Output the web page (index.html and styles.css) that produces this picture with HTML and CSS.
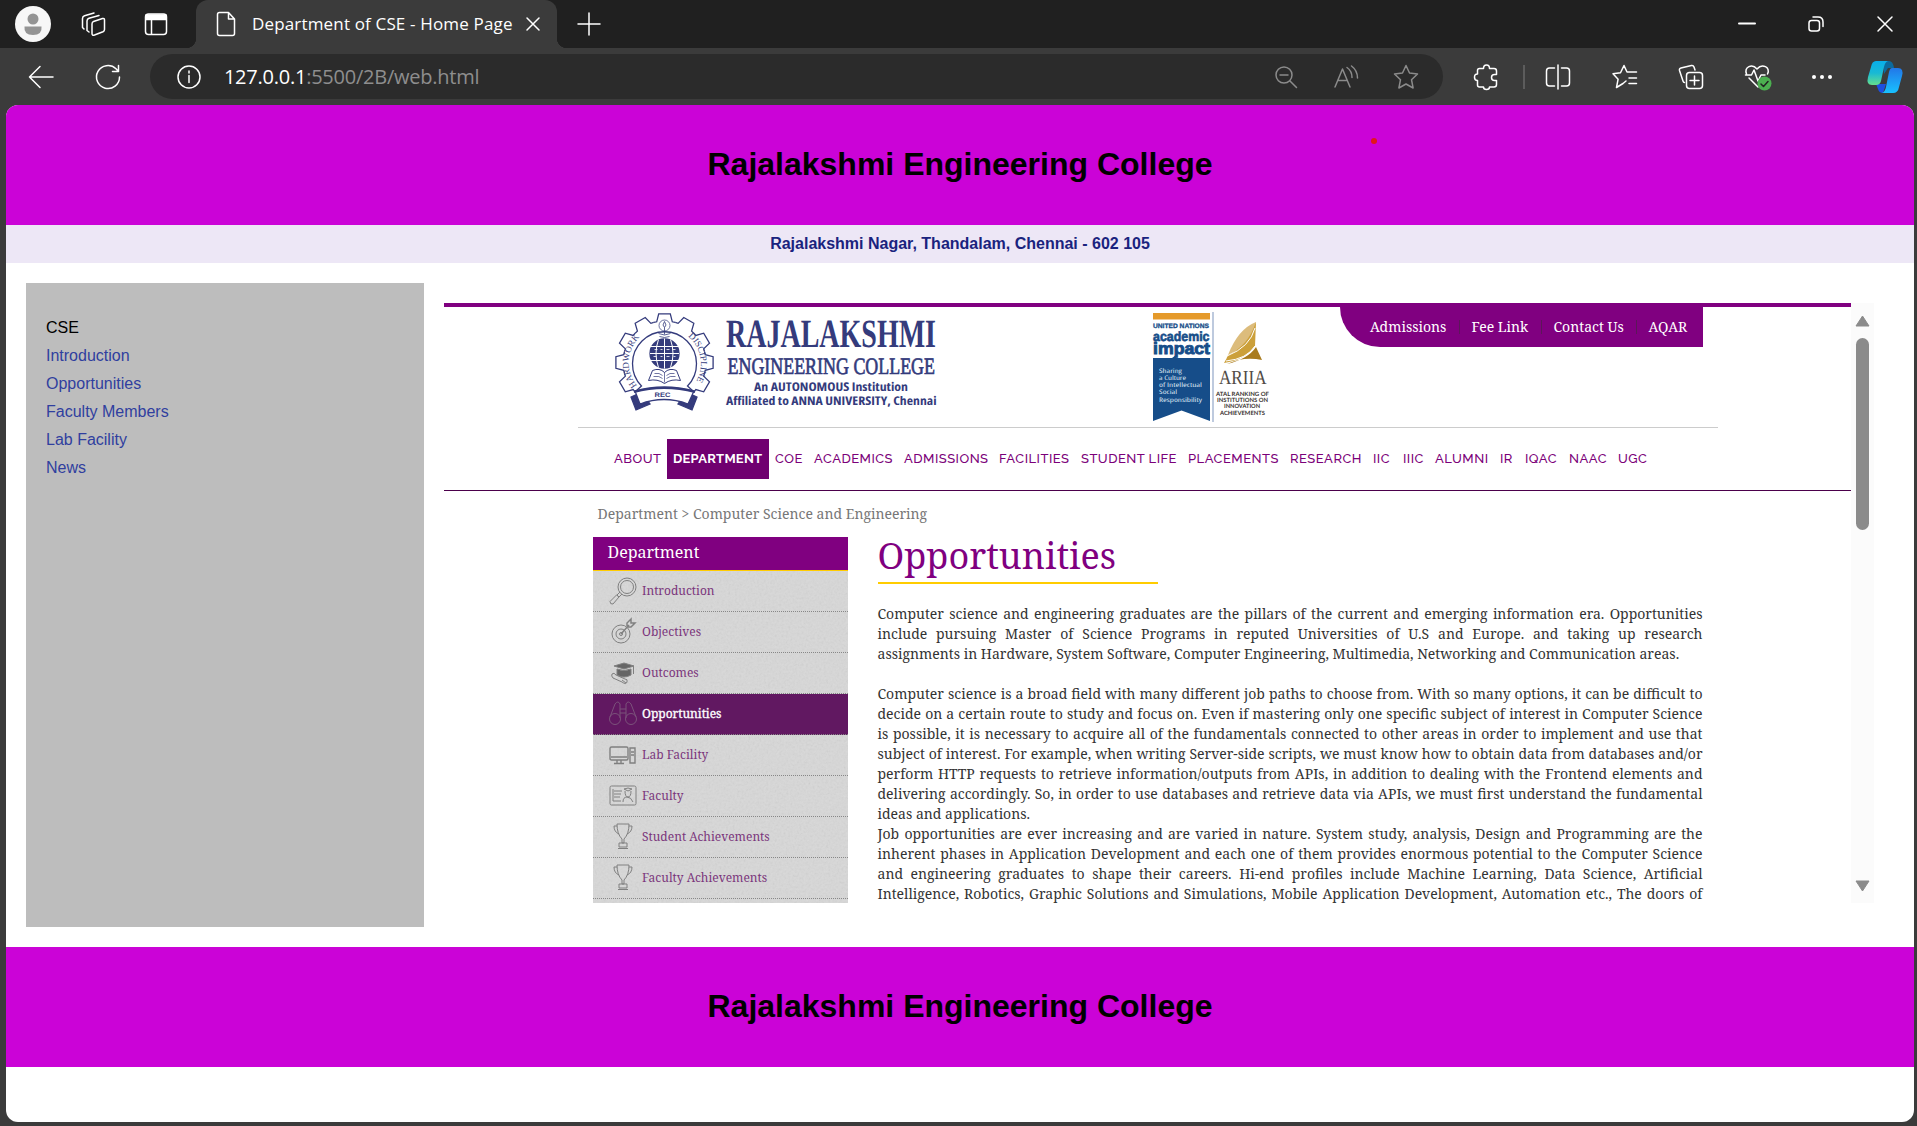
FILE: index.html
```html
<!DOCTYPE html>
<html lang="en">
<head>
<meta charset="utf-8">
<title>Department of CSE - Home Page</title>
<link rel="stylesheet" href="styles.css">
</head>
<body>
<div class="browser">
  <div class="titlebar">
    <div class="cell profile"><svg width="36" height="36" viewBox="0 0 36 36"><circle cx="18" cy="18" r="18" fill="#f7f7f7"/><circle cx="18" cy="13" r="5.500" fill="#949494"/><path d="M9.500 20.500h17q1 8.500-8.500 8.500t-8.500-8.500z" fill="#949494"/></svg></div>
    <div class="cell spaces"><svg class="ico" width="26" height="26" viewBox="0 0 26 26"><path d="M13.500 10.500L22.500 7.500Q24.500 7 24.500 9V18.500Q24.500 20 23 20.700L14.500 24Q12 24.800 12 22.500V13Q12 11 13.500 10.500z"/><path d="M9 21l-2-1.500V10q0-2 2-2.800L19 4.500M4 18l-1.500-1.500V7.500q0-2 2-2.700L14 2"/></svg></div>
    <div class="cell tabs-ico"><svg class="ico" width="24" height="24" viewBox="0 0 24 24"><rect x="1.500" y="2" width="21" height="20.500" rx="3"/><path d="M2 3h20v4.500H2z" fill="#fff"/><path d="M7.500 7v15"/></svg></div>
    <div class="tab">
      <svg class="ico" width="20" height="26" viewBox="0 0 20 26"><path d="M3.500 1.500h9l6 6.500v14.500q0 2-2 2h-13q-2 0-2-2v-19q0-2 2-2zM12.500 1.500v6.500h6"/></svg>
      <span class="tab-title">Department of CSE - Home Page</span>
      <svg class="ico x" width="14" height="14" viewBox="0 0 14 14"><path d="M1 1l12 12M13 1L1 13"/></svg>
    </div>
    <svg class="ico plus" width="22" height="22" viewBox="0 0 22 22"><path d="M11 0v22M0 11h22"/></svg>
    <div class="winctl">
      <svg class="ico" width="16" height="16" viewBox="0 0 16 16"><path d="M0 7.500h16" stroke-width="2"/></svg>
      <svg class="ico" width="16" height="16" viewBox="0 0 16 16"><rect x="1" y="4.500" width="10.500" height="10.500" rx="2.500"/><path d="M5 1h5q5 0 5 5v4.500"/></svg>
      <svg class="ico" width="16" height="16" viewBox="0 0 16 16"><path d="M1 1l14 14M15 1L1 15"/></svg>
    </div>
  </div>
  <div class="toolbar">
    <div class="cell back"><svg class="ico" width="26" height="24" viewBox="0 0 26 24"><path d="M25 12H1.500M12 1.500L1.500 12 12 22.500"/></svg></div>
    <div class="cell reload"><svg class="ico" width="26" height="26" viewBox="0 0 26 26"><path d="M24.500 13A11.500 11.500 0 1 1 21 4.800L23.500 7.500M23.500 1.500v6h-6"/></svg></div>
    <div class="omnibox">
      <svg class="ico" width="24" height="24" viewBox="0 0 24 24"><circle cx="12" cy="12" r="11"/><path d="M12 10.500v7M12 6v2"/></svg>
      <span class="url"><b>127.0.0.1</b>:5500/2B/web.html</span>
      <div class="cell addr"><svg class="ico dim" width="24" height="24" viewBox="0 0 24 24"><circle cx="10" cy="10" r="8"/><path d="M6 10h8M16 16l6.500 6.500"/></svg></div>
      <div class="cell addr"><svg class="ico dim" width="26" height="24" viewBox="0 0 26 24"><path d="M2 22L9.500 4 17 22M5 15.500h9M14 2.500q5 3.500 5 10M18.500 1q6 4.500 6 12"/></svg></div>
      <div class="cell addr"><svg class="ico dim" width="26" height="26" viewBox="0 0 26 26"><path d="M13 1.500l3.500 7.500 8 1-6 5.700 1.600 8.300-7.100-4-7.100 4 1.600-8.300-6-5.700 8-1z"/></svg></div>
    </div>
    <div class="tools">
      <div class="cell"><svg class="ico" width="25" height="26" viewBox="0 0 25 26"><path d="M5.500 4.500h4q0-3.500 3-3.500t3 3.500h4.500q2.500 0 2.500 2.500v3.500h-2q-3 0-3 3t3 3h2v4q0 2.500-2.500 2.500h-4.500q0 2.500-3 2.500t-3-2.500h-4q-2 0-2-2v-4.500q-3 0-3-3.300t3-3.200V6.500q0-2 2-2z"/></svg></div>
      <i class="sep"></i>
      <div class="cell"><svg class="ico" width="26" height="26" viewBox="0 0 26 26"><path d="M9.500 4h-5q-3 0-3 3v12q0 3 3 3h5M16.500 4h5q3 0 3 3v12q0 3-3 3h-5M13 1v24"/></svg></div>
      <div class="cell"><svg class="ico" width="26" height="26" viewBox="0 0 26 26"><path d="M14 17l-3 2.500-6.500 4 1.600-8.300L1 9.800l7.500-1L12 1.500l3 6.500h9.500M17 14h7.500M17 19.500h7.500"/></svg></div>
      <div class="cell"><svg class="ico" width="26" height="26" viewBox="0 0 26 26"><rect x="8.500" y="8.500" width="16" height="16" rx="3"/><path d="M16.500 12v9M12 16.500h9M17 6l-1-3q-.7-2-2.600-1.500L3 4q-2 .5-1.500 2.500L5 17q.4 1.500 1.500 1.500"/></svg></div>
      <div class="cell"><svg class="ico" width="28" height="28" viewBox="0 0 28 28"><path d="M2.500 11C0 4 8 0 13 6 18 0 27 4 23.500 11M5 15l9 9M1.500 12h6l2.500-5 4 11 3-6h4"/><circle cx="20.500" cy="20.500" r="7" fill="#4caf50" stroke="none"/><path d="M17 21l2.500 2.500 4.500-5" stroke="#222"/></svg></div>
      <div class="cell"><svg width="22" height="6" viewBox="0 0 22 6"><g fill="#fff"><circle cx="3" cy="3" r="2"/><circle cx="11" cy="3" r="2"/><circle cx="19" cy="3" r="2"/></g></svg></div>
      <div class="cell"><svg width="36" height="33" viewBox="0 0 36 33"><defs><linearGradient id="cg" x2="0" y2="1"><stop stop-color="#08aeea"/><stop offset=".5" stop-color="#19b9d4"/><stop offset="1" stop-color="#65df8d"/></linearGradient><linearGradient id="cb" x2="0" y2="1"><stop stop-color="#2277e8"/><stop offset="1" stop-color="#18c1ff"/></linearGradient></defs><path d="M16 1h6q4 0 5 7h-6l-4 6z" fill="#0c6a9e"/><path d="M9 24h10l-3 9q-4 0-5-4z" fill="#1d4fe0"/><path d="M9 1h12q-3 1-4 6l-3 14q-1 4-5 4H5q-6 0-4-8L4 7Q5 1 9 1z" fill="url(#cg)"/><path d="M25 8h6q6 0 4 8l-3 11q-1 6-6 6H15q3-1 4-6l3-15q1-4 3-4z" fill="url(#cb)"/></svg></div>
    </div>
  </div>

  <main class="page">
    <header class="banner"><h1>Rajalakshmi Engineering College</h1><i class="dot"></i></header>
    <div class="address">Rajalakshmi Nagar, Thandalam, Chennai - 602 105</div>
    <div class="columns">
      <nav class="menu"><span>CSE</span><a>Introduction</a><a>Opportunities</a><a>Faculty Members</a><a>Lab Facility</a><a>News</a></nav>
      <section class="frame">
        <div class="site">
          <div class="site-top">
            <svg class="rec" width="324" height="106" viewBox="613 311 324 106">
              <g fill="none" stroke="#343b7c" stroke-width="1.300">
                <g transform="translate(664.500 362.500)">
                  <defs><path id="tooth" d="M-10.740-40.080L-7.800-40.700-5.800-48.600H5.800L7.800-40.700 10.740-40.080"/><path id="la" d="M-27.500 23A35.500 35.500 0 0 1-17-31"/><path id="ra" d="M23.500-26A35 35 0 0 1 27 25"/></defs>
                  <use href="#tooth"/><use href="#tooth" transform="rotate(30)"/><use href="#tooth" transform="rotate(60)"/><use href="#tooth" transform="rotate(90)"/><use href="#tooth" transform="rotate(120)"/><use href="#tooth" transform="rotate(-30)"/><use href="#tooth" transform="rotate(-60)"/><use href="#tooth" transform="rotate(-90)"/><use href="#tooth" transform="rotate(-120)"/>
                  <path d="M-29.300 29.300L-23 23.500A32 32 0 1 1 23 23.500L29.300 29.300"/>
                  <circle cy="-9" r="14.500" fill="#343b7c"/>
                  <path stroke="#fff" stroke-width="1" d="M-14-16H14M-14.500-9H14.500M-14-2H14M0-24V6M-6-23Q-11-9-6 5M6-23Q11-9 6 5"/>
                  <path stroke="#fff" stroke-width=".8" d="M-10-13h3m3 0h2m4 0h3m3 0h3M-11-6h3m4 0h2m4 0h3m4 0h2"/>
                  <circle cy="-37" r="5.500" fill="#fff" stroke-width=".7"/><path stroke-width=".8" d="M0-41q3 4 0 6-3-2 0-6zM0-35v7M-6-29q6 3 12 0M-5-26q5 2 10 0"/>
                  <path fill="#fff" stroke-width="1" d="M-12 8q7-3 12 2 5-5 12-2l4 10q-9-2-16 3-7-5-16-3z"/><path stroke-width=".7" d="M0 10v10M-10 11q5-1 8 2M-11 14q6-1 9 2M10 11q-5-1-8 2M11 14q-6-1-9 2"/>
                </g>
                <path d="M642 392l-11 5 5 13 14-6-3-4z" fill="#343b7c"/><path d="M686 392l11 5-5 13-14-6 3-4z" fill="#343b7c"/>
                <path fill="#fff" d="M635 391Q664 383 694 391L688 404Q664 395 640 404z"/><path d="M634 392Q664 384 695 392" stroke-width="2"/>
              </g>
              <g fill="#343b7c" font-family="Liberation Serif, serif">
                <g transform="translate(664.500 362.500)" font-size="9"><text><textPath href="#la">HARDWORK</textPath></text><text><textPath href="#ra">DISCIPLINE</textPath></text></g>
                <text x="726" y="346.500" font-size="40" font-weight="700" textLength="210" lengthAdjust="spacingAndGlyphs">RAJALAKSHMI</text>
                <text x="727.500" y="374" font-size="23.500" textLength="207.500" lengthAdjust="spacingAndGlyphs" stroke="#343b7c" stroke-width=".7">ENGINEERING COLLEGE</text>
              </g>
              <g fill="#343b7c" font-family="Open Sans, sans-serif" font-weight="700" font-size="12"><text x="654.500" y="396.500" font-size="6.500" textLength="16" lengthAdjust="spacingAndGlyphs" font-family="Liberation Sans, sans-serif">REC</text>
                <text x="754" y="391" textLength="154" lengthAdjust="spacingAndGlyphs">An AUTONOMOUS Institution</text>
                <text x="726" y="405" textLength="210.500" lengthAdjust="spacingAndGlyphs">Affiliated to ANNA UNIVERSITY, Chennai</text></g>
            </svg>
            <svg class="ariia" width="120" height="114" viewBox="1152 311 120 114">
              <path fill="#e59a2a" d="M1153 313h57v6.500h-57z"/><path fill="#164d89" d="M1153 358h19l4-3v3h34v63l-28.500-10.500L1153 421z"/><path stroke="#a9b8d3" stroke-width="1.500" d="M1213 312v110"/>
              <g fill="#164d89" font-family="Liberation Sans, sans-serif" font-weight="700">
                <text x="1153" y="328" font-size="6.500" textLength="56" lengthAdjust="spacingAndGlyphs" stroke="#164d89" stroke-width=".3">UNITED NATIONS</text>
                <text x="1153" y="340.500" font-size="13.500" textLength="56.500" lengthAdjust="spacingAndGlyphs" stroke="#164d89" stroke-width=".6">academic</text>
                <text x="1153" y="354" font-size="16.500" textLength="57" lengthAdjust="spacingAndGlyphs" stroke="#164d89" stroke-width=".9">impact</text></g>
              <g fill="#dbe5f1" font-family="Open Sans, sans-serif" font-size="6.200"><text x="1159" y="373" textLength="23" lengthAdjust="spacingAndGlyphs">Sharing</text><text x="1159" y="380" textLength="27" lengthAdjust="spacingAndGlyphs">a Culture</text><text x="1159" y="387" textLength="43" lengthAdjust="spacingAndGlyphs">of Intellectual</text><text x="1159" y="394" textLength="18" lengthAdjust="spacingAndGlyphs">Social</text><text x="1159" y="401.500" textLength="43" lengthAdjust="spacingAndGlyphs">Responsibility</text></g>
              <path fill="#dcbc7c" d="M1256 322q-18 7-28 33l24-13z"/><path fill="#cca03a" d="M1256 322l-1 24q-10 14-31 17 3-5 4-8 20-9 28-33z"/><path fill="#a97b1d" d="M1256 347l6 13q-18-4-35 4 21-5 29-17z"/><path fill="none" stroke="#fff" d="M1255 328q-5 19-28 28M1255 346q-8 13-29 15"/>
              <text x="1219" y="384" font-family="Liberation Serif, serif" font-size="20" textLength="47.500" lengthAdjust="spacingAndGlyphs" fill="#514b46">ARIIA</text>
              <g fill="#38332f" font-family="Lato, sans-serif" font-size="5.800" font-weight="700"><text x="1216" y="395.500" textLength="53" lengthAdjust="spacingAndGlyphs">ATAL RANKING OF</text><text x="1217" y="401.700" textLength="51" lengthAdjust="spacingAndGlyphs">INSTITUTIONS ON</text><text x="1224" y="408.200" textLength="36" lengthAdjust="spacingAndGlyphs">INNOVATION</text><text x="1220" y="414.700" textLength="45" lengthAdjust="spacingAndGlyphs">ACHIEVEMENTS</text></g>
            </svg>
            <div class="quick"><a>Admissions</a><a>Fee Link</a><a>Contact Us</a><a>AQAR</a></div>
          </div>
          <div class="site-nav"><a>ABOUT</a><a class="on">DEPARTMENT</a><a>COE</a><a>ACADEMICS</a><a>ADMISSIONS</a><a>FACILITIES</a><a>STUDENT LIFE</a><a>PLACEMENTS</a><a>RESEARCH</a><a>IIC</a><a>IIIC</a><a>ALUMNI</a><a>IR</a><a>IQAC</a><a>NAAC</a><a>UGC</a></div>
          <div class="crumb">Department &gt; Computer Science and Engineering</div>
          <div class="content">
            <aside class="side">
              <h3>Department</h3>
              <div class="rows">
              <svg class="grain" width="255" height="332"><filter id="n" x="0" y="0" width="100%" height="100%"><feTurbulence type="fractalNoise" baseFrequency=".45" numOctaves="2"/><feColorMatrix type="saturate" values="0"/></filter><rect width="255" height="332" filter="url(#n)"/></svg>
              <a class="row"><svg width="28" height="28" viewBox="0 0 28 28"><circle cx="18" cy="10" r="9"/><circle cx="18" cy="10" r="6.500"/><path d="M11 15l-3 3 2 2 3-3M7.500 18L1 24.500q0 3 3 2.500L10 20z"/></svg><span>Introduction</span></a>
              <a class="row"><svg width="28" height="28" viewBox="0 0 28 28"><circle cx="12" cy="16" r="9"/><circle cx="12" cy="16" r="5"/><circle cx="12" cy="16" r="1.500"/><path d="M12 16L20 7M18 8V5l4-4v4h4l-4 4h-3" stroke-width="1.500"/></svg><span>Objectives</span></a>
              <a class="row"><svg width="28" height="28" viewBox="0 0 28 28"><path fill="#666" d="M5 7l10-3 10 3-10 3zM8 10q7 3 14 0v6q-7 4-14 0z"/><path d="M24.500 7v8M3 15q2-2 4 1l9 4q3 0 2 3t-5 0L4 19q-2-2-1-4zM13 21l4 3"/></svg><span>Outcomes</span></a>
              <a class="row on"><svg width="28" height="28" viewBox="0 0 28 28"><circle cx="6" cy="19" r="5.500"/><circle cx="22" cy="19" r="5.500"/><path d="M1 17L6 4q3-4 5 0v14M27 17L22 4q-3-4-5 0v14M11 9h6M11 13h6"/></svg><span>Opportunities</span></a>
              <a class="row"><svg width="28" height="28" viewBox="0 0 28 28"><path d="M2.500 6h15q1.500 0 1.500 1.500v10q0 1.500-1.500 1.500h-15Q1 19 1 17.500v-10Q1 6 2.500 6zM2 16h16M8 19v3M12 19v3M5 22.500h10M21 7h5v15h-5zM22 11h3M22 14h3" stroke-width="1.400"/></svg><span>Lab Facility</span></a>
              <a class="row"><svg width="28" height="28" viewBox="0 0 28 28"><rect x="1" y="4" width="26" height="19" rx="1.500"/><path d="M4 7v12h8M5 9h8M5 12h7M5 15h6M14 20q0-5 4-5t6 5M15 7l4-1 4 1-4 2zM16 9q0 6 3 6t3-6"/></svg><span>Faculty</span></a>
              <a class="row"><svg width="28" height="28" viewBox="0 0 28 28"><path d="M8 1h12q0 10-5 15v4h-2v-4Q8 11 8 1zM8 3H5q0 6 5 8M20 3h3q0 6-5 8M10 20h8v4h-8zM9 25.500h10"/></svg><span>Student Achievements</span></a>
              <a class="row"><svg width="28" height="28" viewBox="0 0 28 28"><path d="M8 1h12q0 10-5 15v4h-2v-4Q8 11 8 1zM8 3H5q0 6 5 8M20 3h3q0 6-5 8M10 20h8v4h-8zM9 25.500h10"/></svg><span>Faculty Achievements</span></a>
              </div>
            </aside>
            <article class="text">
              <h2>Opportunities</h2>
              <p><span>Computer science and engineering graduates are the pillars of the current and emerging information era. Opportunities</span>
              <span>include pursuing Master of Science Programs in reputed Universities of U.S and Europe. and taking up research</span>
              <span class="end">assignments in Hardware, System Software, Computer Engineering, Multimedia, Networking and Communication areas.</span></p>
              <p><span>Computer science is a broad field with many different job paths to choose from. With so many options, it can be difficult to</span>
              <span>decide on a certain route to study and focus on. Even if mastering only one specific subject of interest in Computer Science</span>
              <span>is possible, it is necessary to acquire all of the fundamentals connected to other areas in order to implement and use that</span>
              <span>subject of interest. For example, when writing Server-side scripts, we must know how to obtain data from databases and/or</span>
              <span>perform HTTP requests to retrieve information/outputs from APIs, in addition to dealing with the Frontend elements and</span>
              <span>delivering accordingly. So, in order to use databases and retrieve data via APIs, we must first understand the fundamental</span>
              <span class="end">ideas and applications.</span>
              <span>Job opportunities are ever increasing and are varied in nature. System study, analysis, Design and Programming are the</span>
              <span>inherent phases in Application Development and each one of them provides enormous potential to the Computer Science</span>
              <span>and engineering graduates to shape their careers. Hi-end profiles include Machine Learning, Data Science, Artificial</span>
              <span>Intelligence, Robotics, Graphic Solutions and Simulations, Mobile Application Development, Automation etc., The doors of</span></p>
            </article>
          </div>
        </div>
        <div class="scroll"><svg width="15" height="12" viewBox="0 0 15 12"><path d="M7.500 1L14 11H1z"/></svg><i></i><svg class="down" width="15" height="12" viewBox="0 0 15 12"><path d="M7.500 11L14 1H1z"/></svg></div>
      </section>
    </div>
    <footer class="banner"><h1>Rajalakshmi Engineering College</h1></footer>
  </main>
</div>
</body>
</html>
```
FILE: styles.css
```css
* { box-sizing: border-box; }
body { margin: 0; background: #3b3b3b; font-family: "Liberation Sans", Arial, sans-serif; overflow: hidden; }
h1, h2, h3, p { margin: 0; }
svg { display: block; flex: none; overflow: visible; text-rendering: geometricPrecision; }
.browser { width: 1917px; height: 1126px; display: flex; flex-direction: column; }
.ico { fill: none; stroke: #fff; stroke-width: 1.5; stroke-linecap: round; stroke-linejoin: round; }
.dim { stroke: #8b8b8b; }
.cell { display: flex; align-items: center; justify-content: center; }

.titlebar { height: 48px; background: #202020; display: flex; align-items: center; }
.profile { width: 66px; }
.spaces { width: 54px; }
.tabs-ico { width: 72px; }
.tab { position: relative; height: 48px; width: 361px; margin-left: 4px; background: #3b3b3b; border-radius: 12px 12px 0 0; display: flex; align-items: center; padding: 0 17px 0 20px; }
.tab::before, .tab::after { content: ""; position: absolute; bottom: 0; width: 10px; height: 10px; }
.tab::before { left: -10px; background: radial-gradient(circle at 0 0, #202020 10px, #3b3b3b 10.5px); }
.tab::after { right: -10px; background: radial-gradient(circle at 100% 0, #202020 10px, #3b3b3b 10.5px); }
.tab-title { color: #fff; font: 17px/24px "Open Sans", sans-serif; white-space: nowrap; margin-left: 16px; letter-spacing: .16px; width: 275px; }
.plus { margin-left: 21px; }
.winctl { margin-left: auto; display: flex; gap: 53px; padding-right: 24px; }

.toolbar { height: 57px; display: flex; align-items: center; flex: none; }
.back { width: 83px; }
.reload { width: 50px; }
.omnibox { width: 1294px; height: 45px; margin-left: 17px; border-radius: 23px; background: #2b2b2b; display: flex; align-items: center; padding: 0 7px 0 27px; }
.url { flex: 1; margin-left: 23px; color: #8e8e8e; font: 20px/28px "Open Sans", sans-serif; letter-spacing: -.24px; }
.url b { color: #fff; font-weight: 400; }
.addr { width: 60px; }
.tools { display: grid; grid-template-columns: 74px 1px 68px 65px 68px 66px 62px 64px; align-items: center; margin-left: 6px; }
.sep { width: 2px; height: 24px; background: #5c5c5c; }

.page { width: 1908px; height: 1017px; margin-left: 6px; border-radius: 12px; background: #fff; overflow: hidden; flex: none; }
.banner { height: 120px; background: #cb03d7; display: flex; align-items: center; justify-content: center; position: relative; padding-bottom: 2px; }
.banner h1 { font-size: 32px; line-height: 38px; color: #000; }
.dot { position: absolute; left: 1365px; top: 33px; width: 6px; height: 6px; border-radius: 3px; background: #e3151a; }
.address { height: 38px; background: #ede7f6; color: #1a237e; font-weight: 700; font-size: 16px; line-height: 37px; text-align: center; }
.columns { display: flex; padding: 20px; height: 684px; }
.menu { width: 398px; height: 644px; background: #bdbdbd; padding: 31px 20px; display: flex; flex-direction: column; font-size: 16px; line-height: 28px; color: #303f9f; }
.menu span { color: #000; }
.frame { margin: 20px 0 0 20px; width: 1430px; height: 600px; display: flex; background: #fff; overflow: hidden; }

.site { width: 1407px; height: 600px; border-top: 4px solid #800080; overflow: hidden; font-family: "Noto Serif", "DejaVu Serif Condensed", "DejaVu Serif", serif; font-stretch: condensed; color: #333; }
.site-top { display: flex; margin-left: 134px; width: 1140px; height: 121px; border-bottom: 1px solid #ccc; }
.rec { margin: 4px 0 0 35px; }
.ariia { margin: 4px 0 0 215px; }
.quick { margin-left: 68px; width: 363px; height: 40px; background: #800080; border-radius: 0 0 0 40px; color: #fff; display: grid; grid-template-columns: 89px 82px 95px 52px; padding-left: 30px; font-size: 14px; line-height: 40px; white-space: nowrap; }
.quick a + a { padding-left: 12.5px; background: linear-gradient(#5c1759, #5c1759) 0 13px / 1px 14px no-repeat; }
.site-nav { height: 63px; border-bottom: 1px solid #4b004b; padding: 11px 0 0 164px; display: grid; grid-template-columns: 59px 102px 39px 90px 95px 82px 107px 102px 83px 30px 32px 65px 25px 44px 49px 42px; font: 500 13px/40px "Raleway", Lato, sans-serif; letter-spacing: .48px; color: #7b0079; white-space: nowrap; }
.site-nav a { height: 40px; padding-left: 6px; }
.site-nav .on { background: #700070; color: #fff; font-weight: 700; letter-spacing: .25px; }
.crumb { padding: 11px 0 0 153.5px; height: 46px; font-size: 14px; line-height: 24px; color: #777; }
.content { display: flex; margin-left: 149px; }
.side { width: 255px; height: 366px; }
.side h3 { height: 34px; background: #800080; border-bottom: 1px solid #fc0; color: #fff; font-size: 16px; font-weight: 400; line-height: 30px; padding-left: 14.5px; }
.rows { position: relative; height: 332px; background: #d8d8d8; overflow: hidden; }
.grain { position: absolute; left: 0; top: 0; opacity: .18; overflow: hidden; }
.row { position: relative; height: 41px; border-bottom: 1px dotted #888; display: flex; align-items: center; padding-left: 16px; gap: 5px; font-size: 12px; color: #7b367c; }
.row span { padding-bottom: 2px; }
.row svg { fill: none; stroke: #808080; stroke-width: 1; }
.row.on { background: #611861; color: #fff; -webkit-text-stroke: .3px #fff; }
.row.on svg { stroke: #7b527b; }
.text { width: 825px; margin-left: 29.5px; }
.text h2 { font-size: 36px; font-weight: 400; line-height: 38px; height: 47px; width: 280px; color: #800080; border-bottom: 2px solid #fc0; margin: 0 0 20px 0; }
.text p { font-size: 14px; line-height: 20px; margin-bottom: 20px; }
.text p span { display: block; white-space: nowrap; text-align: justify; text-align-last: justify; }
.text p .end { text-align-last: left; }
.scroll { width: 23px; background: #fbfbfb; display: flex; flex-direction: column; align-items: center; padding: 12px 0 11px; }
.scroll svg { fill: #8b8b8b; stroke: #8b8b8b; stroke-linejoin: round; }
.scroll i { width: 13px; height: 192px; border-radius: 7px; background: #8b8b8b; margin-top: 11px; }
.scroll .down { margin-top: auto; }
```
